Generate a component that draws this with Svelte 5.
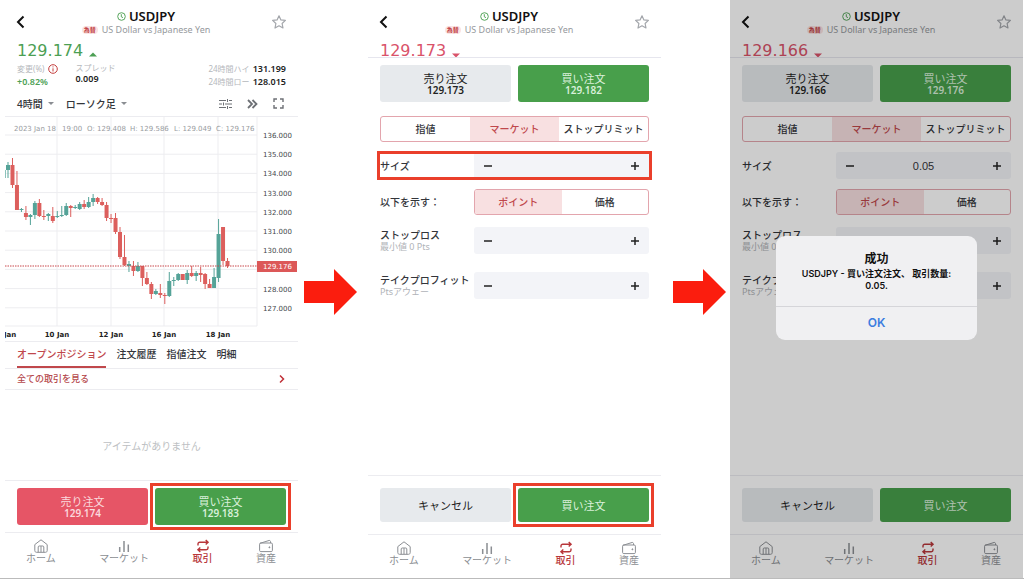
<script lang="ts">
  type Candle = [up: number, high: number, low: number, top: number, bottom: number];

  // positions inside the 293 wide chart canvas
  const candles: Candle[] = [
    [1, 46, 62, 49, 54], [0, 42, 72, 49, 69], [0, 55, 94, 69, 94], [1, 92, 96, 93, 94],
    [0, 90, 104, 97, 101], [1, 98, 109, 99, 101], [1, 85, 103, 87, 99], [0, 83, 101, 87, 100],
    [0, 94, 104, 100, 101], [1, 97, 105, 98, 100], [0, 91, 107, 100, 105], [1, 95, 102, 100, 101],
    [1, 90, 101, 99, 100], [1, 87, 100, 90, 99], [0, 89, 101, 90, 92], [1, 89, 93, 91, 92],
    [1, 86, 94, 88, 93], [0, 84, 93, 88, 91], [1, 81, 92, 86, 91], [1, 78, 90, 82, 86],
    [0, 81, 88, 82, 86], [0, 82, 90, 86, 89], [0, 86, 105, 89, 102], [0, 98, 107, 102, 103],
    [0, 97, 118, 102, 116], [0, 111, 143, 116, 141], [0, 119, 150, 141, 149], [1, 145, 156, 148, 150],
    [0, 145, 160, 150, 155], [1, 146, 156, 150, 155], [0, 150, 170, 150, 162], [0, 156, 169, 162, 168],
    [0, 166, 183, 168, 178], [1, 173, 179, 175, 178], [0, 168, 182, 177, 179], [0, 177, 188, 179, 180],
    [1, 156, 181, 165, 180], [1, 161, 170, 164, 165], [1, 157, 165, 158, 164], [0, 158, 164, 158, 164],
    [1, 154, 168, 157, 164], [0, 150, 161, 157, 160], [1, 155, 165, 157, 160], [0, 151, 166, 157, 159],
    [0, 157, 173, 158, 168], [0, 163, 172, 168, 172], [1, 152, 172, 161, 172], [1, 103, 166, 118, 162],
    [0, 111, 149, 111, 145], [0, 142, 152, 145, 150]
  ];
  const prices = [136, 135, 134, 133, 132, 131, 130, 129, 128, 127];
  // 129 sits under the last price tag
  const ticks = prices.filter((p) => p !== 129);
  const days = [
    { x: 52, label: '10 Jan' },
    { x: 106, label: '12 Jan' },
    { x: 159, label: '16 Jan' },
    { x: 213, label: '18 Jan' }
  ];
  const ohlc = [
    { x: 9, t: '2023 Jan 18' },
    { x: 57, t: '19:00' },
    { x: 82, t: 'O: 129.408' },
    { x: 125, t: 'H: 129.586' },
    { x: 169, t: 'L: 129.049' },
    { x: 211, t: 'C: 129.176' }
  ];

  const priceY = (p: number) => 19 + (136 - p) * 19.2;
  const candleX = (i: number) => 3 + i * 4.48;

  let size = $state('0.05');
  let dialogOpen = $state(true);
</script>

{#snippet header(price: string, up: boolean)}
  <header class="head">
    <button class="icon-btn" aria-label="戻る">
      <svg width="9" height="14" viewBox="0 0 9 14"><path d="M7.5 1.5 2 7l5.5 5.5" fill="none" stroke="#111" stroke-width="2" /></svg>
    </button>
    <div class="pair">
      <h1>
        <svg width="9" height="9" viewBox="0 0 9 9" fill="none" stroke="#57a55c"><circle cx="4.5" cy="4.5" r="3.8" /><path d="M4.3 2.2v2.6l1.7.8" /></svg>
        USDJPY
      </h1>
      <p><span class="tag">為替</span>US Dollar vs Japanese Yen</p>
    </div>
    <button class="icon-btn" aria-label="お気に入り">
      <svg width="14" height="14" viewBox="0 0 14 14"><path d="M7 .8l1.9 4.100 4.500.5-3.300 3.100.9 4.500L7 10.800 3 13l.9-4.500L.6 5.400l4.500-.5z" fill="none" stroke="#a3a6ab" stroke-width="1.200" stroke-linejoin="round" /></svg>
    </button>
  </header>
  <div class="price" class:down={!up}>
    {price}
    <svg width="8" height="5" viewBox="0 0 8 5"><path d={up ? 'M0 4.5 4 .5l4 4z' : 'M0 .5h8l-4 4z'} fill="currentColor" /></svg>
  </div>
{/snippet}

{#snippet nav()}
  <nav class="nav">
    <a href="#home">
      <svg width="14" height="14" viewBox="0 0 14 14"><path d="M.8 5.600 7 .8l6.200 4.800v6c0 1-.7 1.700-1.700 1.700h-9c-1 0-1.700-.7-1.700-1.700z" /><path d="M4.200 13.200V8c0-.6.400-1 1-1h3.600c.6 0 1 .4 1 1v5.200M7 7.200v6" /></svg>
      ホーム
    </a>
    <a href="#market">
      <svg width="14" height="14" viewBox="0 0 14 14"><path d="M2.7 13V8M7 13V2M11.3 13V5.500" stroke-width="1.500" /></svg>
      マーケット
    </a>
    <a href="#trade" class="active">
      <svg width="14" height="14" viewBox="0 0 14 14"><path d="M2 6.500V5c0-1 .7-1.700 1.700-1.700H12M9.700 1l2.400 2.300-2.400 2.300M12 7.500V9c0 1-.7 1.700-1.700 1.700H2M4.300 8.400 1.900 10.700 4.300 13" stroke-width="1.400" /></svg>
      取引
    </a>
    <a href="#assets">
      <svg width="14" height="14" viewBox="0 0 14 14"><rect x=".6" y="4" width="12.800" height="8.600" rx="1.200" /><path d="M1 4.300 10 1.500c.8-.2 1.500.3 1.500 1V4" /><circle cx="10.400" cy="8.300" r=".5" fill="currentColor" /></svg>
      資産
    </a>
  </nav>
{/snippet}

{#snippet stepper(id: string, value: string)}
  <div class="stepper">
    <button aria-label="減らす"><svg width="10" height="10" viewBox="0 0 10 10"><path d="M1 5h8" stroke="#222" stroke-width="1.500" /></svg></button>
    <input {id} type="text" inputmode="decimal" {value} />
    <button aria-label="増やす"><svg width="10" height="10" viewBox="0 0 10 10"><path d="M1 5h8M5 1v8" stroke="#222" stroke-width="1.500" /></svg></button>
  </div>
{/snippet}

{#snippet order(key: string, sell: string, buy: string, amount: string, marked: boolean)}
  <div class="quotes">
    <button class="btn plain">売り注文<b>{sell}</b></button>
    <button class="btn buy">買い注文<b>{buy}</b></button>
  </div>
  <div class="form">
    <div class="segment three">
      <button>指値</button><button class="on">マーケット</button><button>ストップリミット</button>
    </div>
    <div class="row size" class:marked-row={marked}>
      <label for="{key}-size">サイズ</label>
      {@render stepper(`${key}-size`, amount)}
    </div>
    <div class="row show">
      <span>以下を示す：</span>
      <div class="segment"><button class="on">ポイント</button><button>価格</button></div>
    </div>
    <div class="row stop">
      <label for="{key}-sl">ストップロス<small>最小値 0 Pts</small></label>
      {@render stepper(`${key}-sl`, '')}
    </div>
    <div class="row take">
      <label for="{key}-tp">テイクプロフィット<small>Ptsアウェー</small></label>
      {@render stepper(`${key}-tp`, '')}
    </div>
  </div>
  <div class="actions">
    <button class="btn plain">キャンセル</button>
    <button class="btn buy" class:marked>買い注文</button>
  </div>
  {@render nav()}
{/snippet}

{#snippet arrow()}
  <svg width="53" height="46" viewBox="0 0 53 46"><path d="M0 12h30V0l23 23-23 23V34H0z" fill="#fb1d0e" /></svg>
{/snippet}

<main class="steps">
  <section class="phone overview">
    {@render header('129.174', true)}
    <div class="stats">
      <div>
        <span>変更(%) <svg width="10" height="10" viewBox="0 0 10 10" fill="none" stroke="#c43d3d"><circle cx="5" cy="5" r="4.300" /><path d="M5 4.300v3.200M5 2.400v1" /></svg></span>
        <b class="gain">+0.82%</b>
      </div>
      <div><span>スプレッド</span><b>0.009</b></div>
      <dl>
        <dt>24時間ハイ</dt><dd>131.199</dd>
        <dt>24時間ロー</dt><dd>128.015</dd>
      </dl>
    </div>
    <div class="tools">
      <button>4時間 <i class="caret"></i></button>
      <button>ローソク足 <i class="caret"></i></button>
      <div class="tool-icons">
        <button aria-label="設定"><svg width="13" height="12" viewBox="0 0 13 12" fill="none" stroke="#6d7075"><path d="M0 2.500h7M10 2.500h3M0 6h3M6 6h7M0 9.500h7M10 9.500h3M8.500 1v3M4.500 4.500v3M8.500 8v3" /></svg></button>
        <button aria-label="進む"><svg width="11" height="10" viewBox="0 0 11 10" fill="none" stroke="#6d7075" stroke-width="1.800"><path d="M1 1l4 4-4 4M5.500 1l4 4-4 4" /></svg></button>
        <button aria-label="全画面"><svg width="11" height="11" viewBox="0 0 11 11" fill="none" stroke="#6d7075" stroke-width="1.400"><path d="M1 4V1h3M7 1h3v3M10 7v3H7M4 10H1V7" /></svg></button>
      </div>
    </div>

    <svg class="chart" viewBox="0 1 293 224" role="img" aria-label="USDJPY 4時間 ローソク足">
      <g class="grid">
        {#each prices as p}
          <path d="M0 {priceY(p)}H252" />
        {/each}
        {#each days as d}
          <path d="M{d.x} 0V210" />
        {/each}
        <path d="M252 0V210M0 210H252" />
      </g>
      <path d="M.5 54v8" stroke="#8cc3bb" />
      {#each candles as [up, high, low, top, bottom], i}
        <g fill={up ? '#55a398' : '#dc5f5d'}>
          <rect x={candleX(i) - 0.5} y={high} width="1" height={low - high} />
          <rect x={candleX(i) - 2} y={top} width="4" height={bottom - top} />
        </g>
      {/each}
      {#each ohlc as o}
        <text class="ohlc" x={o.x} y="15">{o.t}</text>
      {/each}
      {#each ticks as p}
        <text class="tick" x="258" y={priceY(p) + 3}>{p}.000</text>
      {/each}
      <path d="M0 150H252" stroke="#c9484d" stroke-dasharray="1.500 1" />
      <rect x="252" y="145" width="40" height="11" fill="#dc5858" />
      <text class="last" x="258" y="153">129.176</text>
      <text class="day" x="-1" y="221">Jan</text>
      {#each days as d}
        <text class="day" x={d.x} y="221" text-anchor="middle">{d.label}</text>
      {/each}
    </svg>

    <div class="tabs">
      <button class="on">オープンポジション</button><button>注文履歴</button><button>指値注文</button><button>明細</button>
    </div>
    <a class="all" href="#all">
      全ての取引を見る
      <svg width="6" height="10" viewBox="0 0 6 10"><path d="M1 1.500 4.500 5 1 8.500" fill="none" stroke="#c03038" stroke-width="1.500" /></svg>
    </a>
    <p class="empty">アイテムがありません</p>
    <div class="actions">
      <button class="btn sell">売り注文<b>129.174</b></button>
      <button class="btn buy marked">買い注文<b>129.183</b></button>
    </div>
    {@render nav()}
  </section>

  <div class="arrow first" aria-hidden="true">{@render arrow()}</div>

  <section class="phone ticket">
    {@render header('129.173', false)}
    {@render order('a', '129.173', '129.182', '', true)}
  </section>

  <div class="arrow second" aria-hidden="true">{@render arrow()}</div>

  <section class="phone ticket">
    {@render header('129.166', false)}
    {@render order('b', '129.166', '129.176', size, false)}
    {#if dialogOpen}
      <div class="overlay">
        <div class="dialog" role="alertdialog" aria-labelledby="done-title">
          <h2 id="done-title">成功</h2>
          <p>USDJPY - 買い注文注文、 取引数量: {size}.</p>
          <button onclick={() => (dialogOpen = false)}>OK</button>
        </div>
      </div>
    {/if}
  </section>
</main>

<style>
  :global(body) {
    background: #fff;
  }

  .steps {
    display: grid;
    grid-template-columns: minmax(0, 1fr) 70px minmax(0, 1fr) 69px minmax(0, 1fr);
    box-sizing: border-box;
    min-height: 100vh;
    padding: 0 1px 0 5px;
    border-bottom: 1px solid #bbb;
    font-family: 'Noto Sans', 'Noto Sans CJK JP', sans-serif;
    font-size: 10px;
    line-height: 12px;
    color: #33353a;
  }

  button,
  input {
    margin: 0;
    padding: 0;
    border: 0;
    background: none;
    color: inherit;
    font: inherit;
  }

  h1, h2, p, dl, dd { margin: 0; }
  a { color: inherit; text-decoration: none; }
  svg { display: block; }

  .phone {
    position: relative;
    display: flex;
    flex-direction: column;
  }

  .arrow {
    display: flex;
    align-items: center;
    padding-top: 6px;
  }

  .arrow.first { padding-left: 6px; }
  .arrow.second { padding-left: 12px; }

  /* header */
  .head {
    display: flex;
    align-items: center;
    justify-content: space-between;
    height: 40px;
    padding: 4px 12px 0 11px;
    box-sizing: border-box;
  }

  .icon-btn { display: flex; }

  .pair {
    margin-right: 5px;
    text-align: center;
  }

  h1 {
    display: flex;
    align-items: center;
    justify-content: center;
    gap: 3px;
    font-size: 13px;
    font-weight: 600;
    line-height: 15px;
    color: #111;
  }

  .pair p {
    display: flex;
    align-items: center;
    gap: 4px;
    font-size: 9px;
    color: #96999d;
  }

  .tag {
    padding: 0 2px;
    border-radius: 4px;
    background: #fae3e3;
    color: #c0393d;
    font-size: 6px;
    font-weight: 700;
    line-height: 8px;
  }

  .price {
    display: flex;
    align-items: center;
    gap: 6px;
    height: 22px;
    padding-left: 12px;
    color: #4c9f54;
    font-family: 'DejaVu Sans', sans-serif;
    font-size: 16px;
    line-height: 22px;
  }

  .price svg { margin-top: 6px; }
  .price.down { color: #d9536a; }

  .ticket .price {
    height: 17px;
    align-items: flex-start;
    overflow: hidden;
    border-bottom: 1px solid #e6e6ee;
  }

  .ticket .price svg { margin-top: 13px; }

  /* overview */
  .stats {
    display: flex;
    gap: 17px;
    height: 29px;
    padding: 0 12px;
    color: #b5b8bc;
    font-size: 8px;
  }

  .stats span {
    display: flex;
    align-items: center;
    gap: 4px;
    line-height: 14px;
  }

  .stats div + div span { line-height: 11px; }

  .stats b,
  dd {
    color: #222;
    font-size: 9px;
    font-weight: 600;
  }

  .stats b { line-height: 11px; display: block; }
  .stats .gain { color: #4c9f54; }

  dl {
    display: grid;
    grid-template-columns: auto auto;
    gap: 0 3px;
    margin-left: auto;
    align-content: start;
    line-height: 13px;
  }

  .tools {
    display: flex;
    gap: 12px;
    align-items: center;
    height: 25px;
    padding: 0 14px 0 12px;
    font-weight: 500;
  }

  .tools button {
    display: flex;
    align-items: center;
    gap: 5px;
  }

  .caret {
    border: 3px solid transparent;
    border-top-color: #8a8d92;
    border-bottom: 0;
  }

  .tool-icons {
    display: flex;
    gap: 15px;
    margin-left: auto;
  }

  .chart {
    width: 100%;
    border-top: 1px solid #ececf0;
    box-sizing: border-box;
    font-family: 'DejaVu Sans', sans-serif;
    font-size: 7px;
  }

  .grid { stroke: #ededf0; }
  .ohlc { fill: #989ba0; }
  .tick { fill: #44474c; }
  .last { fill: #fff; }
  .day { fill: #222; font-weight: 700; }

  .tabs {
    display: flex;
    gap: 10px;
    height: 26px;
    padding: 0 12px;
    border-top: 1px solid #ececf0;
    border-bottom: 1px solid #ececf0;
    font-weight: 500;
  }

  .tabs button { border-bottom: 2px solid transparent; }

  .tabs .on {
    border-color: #c0484c;
    color: #c0484c;
  }

  .all {
    display: flex;
    align-items: center;
    justify-content: space-between;
    height: 20px;
    padding: 0 13px 0 12px;
    border-bottom: 1px solid #ececf0;
    color: #b5484c;
    font-size: 9px;
    font-weight: 500;
  }

  .empty {
    display: flex;
    flex: 1;
    align-items: center;
    justify-content: center;
    padding-top: 22px;
    color: #bdbfc3;
  }

  /* buttons */
  .actions,
  .quotes {
    display: grid;
    grid-template-columns: 1fr 1fr;
    gap: 7px;
    padding: 7px 12px;
  }

  .actions { border-top: 1px solid #ececf0; }

  .ticket .actions {
    margin-top: auto;
    padding: 12px;
  }

  .btn {
    height: 37px;
    border-radius: 3px;
    font-size: 11px;
    line-height: 13px;
  }

  .ticket .actions .btn { height: 34px; }

  .btn b {
    display: block;
    font-size: 10px;
    font-weight: 600;
    line-height: 11px;
  }

  .sell { background: #e65566; color: #fbd9dd; }
  .buy { background: #489f4b; color: #d9f0da; }
  .plain { background: #e7eaed; color: #222; }

  .marked { position: relative; }

  .marked::after {
    content: '';
    position: absolute;
    inset: -5px;
    border: 3px solid #ea3f2b;
    pointer-events: none;
  }

  /* form */
  .form { padding: 7px 12px 0; }

  .segment {
    display: grid;
    grid-template-columns: 1fr 1fr;
    height: 26px;
    box-sizing: border-box;
    overflow: hidden;
    border: 1px solid #e3a5ad;
    border-radius: 3px;
    font-weight: 500;
  }

  .segment.three { grid-template-columns: 1fr 1fr 1fr; }
  .segment button { white-space: nowrap; }

  .segment .on {
    background: #f8e0e1;
    color: #c0484c;
  }

  .row {
    display: grid;
    grid-template-columns: 94px minmax(0, 1fr);
    align-items: center;
    font-weight: 500;
  }

  .size { margin-top: 10px; }
  .show { margin-top: 10px; }
  .stop { margin-top: 12px; }
  .take { margin-top: 18px; }

  .row small {
    display: block;
    color: #b0b3b8;
    font-size: 9px;
    font-weight: 400;
    line-height: 11px;
  }

  .row label { white-space: nowrap; }

  .marked-row {
    margin-right: -2px;
    margin-left: -2px;
    padding: 0 2px;
    outline: 3px solid #ea3f2b;
    outline-offset: -2px;
  }

  .stepper {
    display: grid;
    grid-template-columns: 28px minmax(0, 1fr) 28px;
    height: 27px;
    border-radius: 3px;
    background: #f3f4f8;
  }

  .stepper button {
    display: flex;
    align-items: center;
    justify-content: center;
  }

  .stepper input {
    font-family: 'Liberation Sans', sans-serif;
    font-size: 11px;
    text-align: center;
  }

  /* bottom navigation */
  .nav {
    display: flex;
    justify-content: space-between;
    padding: 6px 22px 14px 21px;
    border-top: 1px solid #ececf0;
    color: #8b8e93;
    line-height: 11px;
  }

  .ticket .nav { padding-bottom: 12px; }

  .nav a {
    display: flex;
    flex-direction: column;
    align-items: center;
  }

  .nav svg {
    fill: none;
    stroke: currentColor;
  }

  .nav .active {
    color: #b8373b;
    font-weight: 500;
  }

  /* result dialog */
  .overlay {
    position: absolute;
    inset: 0;
    display: flex;
    align-items: center;
    justify-content: center;
    background: rgba(0, 0, 0, 0.2);
  }

  .dialog {
    width: 201px;
    margin-bottom: 3px;
    overflow: hidden;
    border-radius: 9px;
    background: #f0f0f2;
    color: #111;
    font-family: Inter, 'Noto Sans CJK JP', sans-serif;
    text-align: center;
  }

  .dialog h2 {
    padding-top: 14px;
    font-size: 12px;
    font-weight: 700;
    line-height: 18px;
  }

  .dialog p {
    padding: 0 20px 14px;
    font-size: 9px;
    font-weight: 600;
  }

  .dialog button {
    width: 100%;
    height: 34px;
    border-top: 1px solid #d5d5d9;
    color: #3b7de0;
    font-size: 12px;
    font-weight: 600;
  }
</style>
